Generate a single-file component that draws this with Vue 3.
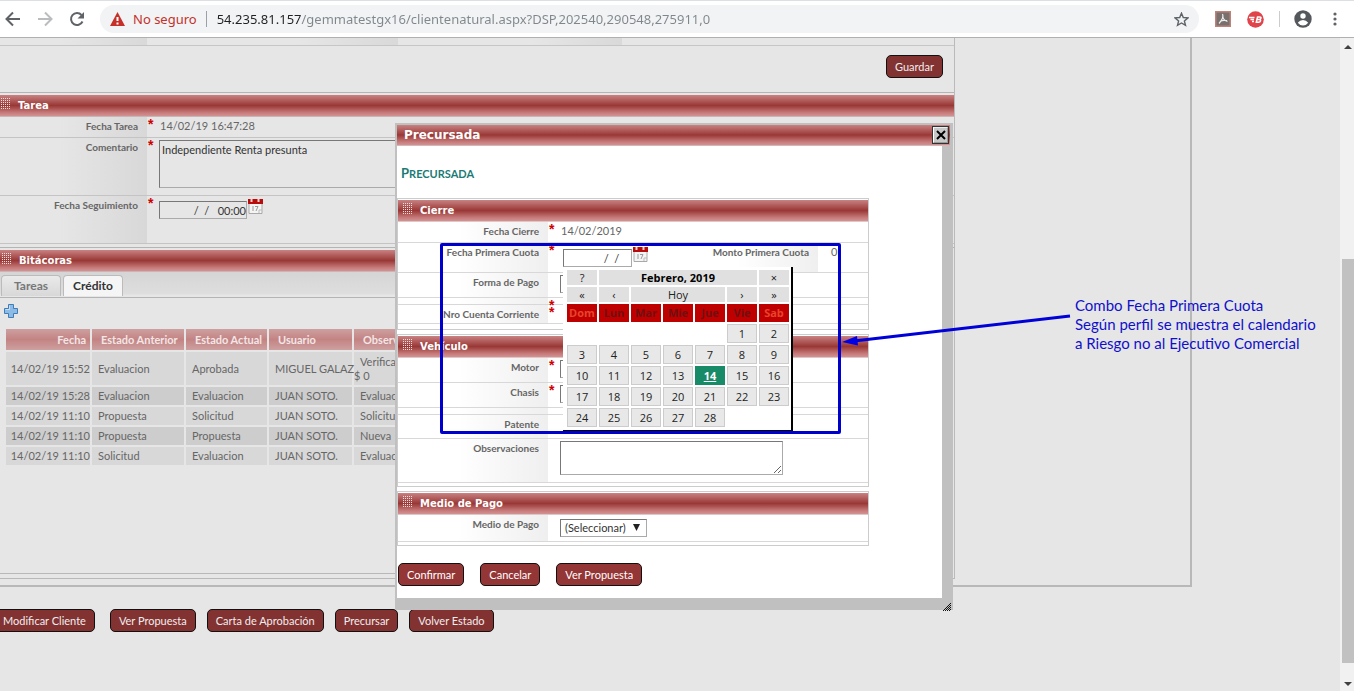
<script setup>
const log = [
  ['14/02/19 15:52', 'Evaluacion', 'Aprobada', 'MIGUEL GALAZ', 'Verificada $ 0'],
  ['14/02/19 15:28', 'Evaluacion', 'Evaluacion', 'JUAN SOTO.', 'Evaluacion'],
  ['14/02/19 11:10', 'Propuesta', 'Solicitud', 'JUAN SOTO.', 'Solicitud'],
  ['14/02/19 11:10', 'Propuesta', 'Propuesta', 'JUAN SOTO.', 'Nueva'],
  ['14/02/19 11:10', 'Solicitud', 'Evaluacion', 'JUAN SOTO.', 'Evaluacion'],
]
const days = ['Dom', 'Lun', 'Mar', 'Mie', 'Jue', 'Vie', 'Sab']
const weeks = [
  [0, 0, 0, 0, 0, 1, 2],
  [3, 4, 5, 6, 7, 8, 9],
  [10, 11, 12, 13, 14, 15, 16],
  [17, 18, 19, 20, 21, 22, 23],
  [24, 25, 26, 27, 28, 0, 0],
]
const actions = ['Modificar Cliente', 'Ver Propuesta', 'Carta de Aprobación', 'Precursar', 'Volver Estado']
</script>

<template>
  <div class="window">
    <svg class="defs" width="0" height="0" aria-hidden="true">
      <symbol id="cal" viewBox="0 0 15 16">
        <path d="M1 5h13v10.500H1z" fill="#f4f4f4" stroke="#a9a9a9" />
        <path d="M0 1h15v5H0z" fill="#b80c0c" />
        <path d="M3.500 1v3M10.500 1v3" stroke="#f3d0d0" stroke-width="2" />
        <path d="M5 8v5M7 8.500h3L8 13" fill="none" stroke="#9a9a9a" />
        <path d="M11 15v-3h3" fill="none" stroke="#bbb" />
      </symbol>
      <symbol id="grip" viewBox="0 0 9 11">
        <path v-for="y in 6" :key="y" :d="`M0 ${y * 2 - 1.5}h9`" stroke="#f4dcdc" stroke-dasharray="1 1" />
      </symbol>
    </svg>

    <header class="chrome">
      <button class="nav" aria-label="Atrás"><svg width="16" height="16" viewBox="0 0 16 16"><path d="M15 8H2M8 1.500 1.500 8 8 14.500" fill="none" stroke="#5f6368" stroke-width="2" /></svg></button>
      <button class="nav" aria-label="Adelante"><svg width="16" height="16" viewBox="0 0 16 16"><path d="M1 8h13M8 1.500 14.500 8 8 14.500" fill="none" stroke="#babcbe" stroke-width="2" /></svg></button>
      <button class="nav" aria-label="Recargar"><svg width="16" height="16" viewBox="0 0 16 16"><path d="M13.500 10.500A6 6 0 1 1 12.500 4" fill="none" stroke="#5f6368" stroke-width="2" /><path d="M15 1v6.500H8.500z" fill="#5f6368" /></svg></button>
      <div class="omnibox">
        <svg width="15" height="14" viewBox="0 0 15 14"><path d="M7.500 0 15 14H0z" fill="#c5302a" /><path d="M7.500 5v4M7.500 10.500v2" stroke="#fff" stroke-width="2" /></svg>
        <span class="insecure">No seguro</span>
        <input class="url" aria-label="Dirección" value="54.235.81.157/gemmatestgx16/clientenatural.aspx?DSP,202540,290548,275911,0" />
        <button class="star" aria-label="Favorito"><svg width="15" height="15" viewBox="0 0 15 15"><path d="M7.500 1.200 9.300 5.500l4.600.4-3.500 3 1.100 4.500-4-2.400-4 2.400 1.100-4.500-3.500-3 4.600-.4z" fill="none" stroke="#5f6368" stroke-width="1.400" /></svg></button>
      </div>
      <div class="tools">
        <svg width="16" height="16" viewBox="0 0 16 16"><path d="M0 0h16v16H0z" fill="#c08278" /><path d="M1.500 1.500h13v13h-13z" fill="#77706e" /><path d="M7.500 3c1 2 .5 5-3.500 9.500M7.700 5c.3 3 2 5 4.800 5.300M5 10.500c2-1.200 4-1.400 7-.8" fill="none" stroke="#eee" stroke-width="1.200" /></svg>
        <svg width="17" height="17" viewBox="0 0 17 17"><circle cx="8.500" cy="8.500" r="8.300" fill="#e0444a" /><path d="M2 6.500h5.500M3.500 8.500H7M5 10.500h2" stroke="#fff" stroke-width="1.400" /><path d="M10.500 6h2.200q1.600.1 1.200 1.300-.3 1.100-1.600 1.200H10q0 0 2.500 0 1.400.3 1 1.500-.4 1.300-1.800 1.300H9.300z" fill="none" stroke="#fff" stroke-width="1.500" /></svg>
        <span class="sep"></span>
        <svg width="18" height="18" viewBox="0 0 18 18"><circle cx="9" cy="9" r="8.700" fill="#54575c" /><circle cx="9" cy="6" r="2.700" fill="#fff" /><path d="M3.800 12.700q2-2.600 5.200-2.600t5.200 2.600Q12 15.600 9 15.600t-5.200-2.900" fill="#fff" /></svg>
        <svg width="4" height="14" viewBox="0 0 4 14"><g fill="#5f6368"><circle cx="2" cy="2" r="1.600" /><circle cx="2" cy="7" r="1.600" /><circle cx="2" cy="12" r="1.600" /></g></svg>
      </div>
    </header>

    <div class="view">
      <main class="page">
        <div class="frame">
          <div class="column">
            <div class="strip"><i></i><i></i><i></i></div>
            <div class="save"><button class="btn">Guardar</button></div>

            <section class="tarea">
              <h2 class="band"><svg class="grip" width="9" height="11"><use href="#grip" /></svg>Tarea</h2>
              <div class="row r-fecha"><span class="lab">Fecha Tarea</span><b class="req">*</b><span class="val">14/02/19 16:47:28</span></div>
              <div class="row r-com"><label class="lab" for="com">Comentario</label><b class="req">*</b><textarea id="com" class="box">Independiente Renta presunta</textarea></div>
              <div class="row r-seg"><label class="lab" for="seg">Fecha Seguimiento</label><b class="req">*</b><input id="seg" class="box" value="/  /   00:00" /><svg class="cal" width="15" height="16"><use href="#cal" /></svg></div>
            </section>

            <section class="bitacoras">
              <h2 class="band"><svg class="grip" width="9" height="11"><use href="#grip" /></svg>Bitácoras</h2>
              <div class="tabs"><button>Tareas</button><button class="on">Crédito</button></div>
              <div class="log">
                <button class="add" aria-label="Agregar"><svg width="14" height="14" viewBox="0 0 14 14"><path d="M4.500.5h5v4h4v5h-4v4h-5v-4h-4v-5h4z" fill="#8dbbe6" stroke="#3f7db8" /><path d="M5.500 1.500v4h-4" fill="none" stroke="#c7e0f7" /></svg></button>
                <table>
                  <colgroup><col class="c1" /><col class="c2" /><col class="c3" /><col class="c4" /><col /></colgroup>
                  <thead><tr><th>Fecha</th><th>Estado Anterior</th><th>Estado Actual</th><th>Usuario</th><th>Observaciones</th></tr></thead>
                  <tbody>
                    <tr v-for="(r, i) in log" :key="i">
                      <td v-for="(c, j) in r" :key="j"><template v-if="i === 0 && j === 4"><span class="ind">Verificada</span><br />$ 0</template><template v-else>{{ c }}</template></td>
                    </tr>
                  </tbody>
                </table>
              </div>
            </section>
            <div class="foot"></div>
          </div>
        </div>
        <div class="actions"><button v-for="a in actions" :key="a" class="btn">{{ a }}</button></div>

        <div class="modal" role="dialog" aria-label="Precursada">
          <h1 class="title"><span>Precursada</span><button aria-label="Cerrar"><svg width="10" height="10" viewBox="0 0 10 10"><path d="m1 1 8 8M9 1 1 9" stroke="#000" stroke-width="2" /></svg></button></h1>
          <div class="body">
            <h2 class="heading">Precursada</h2>

            <section class="group tall">
              <h3 class="band"><svg class="grip" width="9" height="11"><use href="#grip" /></svg>Cierre</h3>
              <div class="row h21"><span class="lab">Fecha Cierre</span><b class="req">*</b><span class="val">14/02/2019</span></div>
              <div class="row h30"><label class="lab" for="cuota">Fecha Primera Cuota</label><b class="req">*</b><input id="cuota" class="box date" value="/  /" /><svg class="cal" width="15" height="16"><use href="#cal" /></svg><span class="lab second">Monto Primera Cuota</span><span class="zero">0</span></div>
              <div class="row h25"><label class="lab" for="forma">Forma de Pago</label><b class="req"></b><input id="forma" class="box field" /></div>
              <div class="row h7"><span class="lab"></span><b class="req">*</b></div>
              <div class="row h19"><span class="lab">Nro Cuenta Corriente</span><b class="req">*</b></div>
            </section>

            <section class="group">
              <h3 class="band"><svg class="grip" width="9" height="11"><use href="#grip" /></svg>Vehículo</h3>
              <div class="row h25"><label class="lab" for="motor">Motor</label><b class="req">*</b><input id="motor" class="box field" /></div>
              <div class="row h25"><label class="lab" for="chasis">Chasis</label><b class="req">*</b><input id="chasis" class="box field" /></div>
              <div class="row h7"><span class="lab"></span></div>
              <div class="row h24"><span class="lab">Patente</span></div>
              <div class="row h44"><label class="lab" for="obs">Observaciones</label><b class="req"></b><textarea id="obs" class="box obs"></textarea></div>
            </section>

            <section class="group">
              <h3 class="band"><svg class="grip" width="9" height="11"><use href="#grip" /></svg>Medio de Pago</h3>
              <div class="row h27"><label class="lab" for="medio">Medio de Pago</label><b class="req"></b>
                <span class="pick"><select id="medio" class="box"><option>(Seleccionar)</option></select><svg width="7" height="7" viewBox="0 0 7 7"><path d="M0 0h7L3.500 7z" fill="#222" /></svg></span>
              </div>
            </section>

            <div class="confirm"><button class="btn">Confirmar</button><button class="btn">Cancelar</button><button class="btn">Ver Propuesta</button></div>
          </div>
          <svg class="grab" width="8" height="8" viewBox="0 0 8 8"><path d="M0 8 8 0M2 8l6-6M4 8l4-4M6 8l2-2" stroke="#111" /></svg>
        </div>

        <table class="calendar">
          <tbody>
            <tr class="top"><td>?</td><td colspan="5" class="month">Febrero, 2019</td><td>×</td></tr>
            <tr class="top"><td>«</td><td>‹</td><td colspan="3">Hoy</td><td>›</td><td>»</td></tr>
            <tr class="names"><th v-for="d in days" :key="d">{{ d }}</th></tr>
            <tr v-for="(w, i) in weeks" :key="i" class="week">
              <td v-for="(d, j) in w" :key="j" :class="{ blank: !d, today: d === 14 }">{{ d || '' }}</td>
            </tr>
          </tbody>
        </table>

        <div class="mark"></div>
        <svg class="arrow" width="232" height="36" viewBox="0 0 232 36"><path d="M228 4 12 29" stroke="#0000d8" stroke-width="3" /><path d="M0 30 15 24 16 33.500z" fill="#0000e6" /></svg>
        <p class="note">Combo Fecha Primera Cuota<br />Según perfil se muestra el calendario<br />a Riesgo no al Ejecutivo Comercial</p>
      </main>

      <div class="scroll">
        <svg width="8" height="4" viewBox="0 0 8 4"><path d="M0 4h8L4 0z" fill="#404040" /></svg>
        <span class="thumb"></span>
        <svg width="8" height="4" viewBox="0 0 8 4"><path d="M0 0h8L4 4z" fill="#404040" /></svg>
      </div>
    </div>
  </div>
</template>

<style>
body { overflow: hidden; }
</style>

<style scoped>
* { box-sizing: border-box; }
.window { height: 100vh; display: flex; flex-direction: column; font: 11px/14px Lato, "Liberation Sans", sans-serif; color: #666; background: #e6e6e6; }
.defs { position: absolute; }
button { font: inherit; color: inherit; background: none; border: 0; padding: 0; }
h1, h2, h3, p { margin: 0; }

.chrome { height: 38px; flex: none; display: flex; align-items: center; background: #fff; border-top: 1px solid #dcdfe3; border-bottom: 1px solid #b0b0b0; padding: 0 17px 0 5px; }
.nav { width: 16px; height: 16px; margin-right: 16px; }
.nav svg, .star svg { display: block; }
.omnibox { flex: 1; height: 28px; display: flex; align-items: center; border-radius: 14px; background: #f1f3f4; padding: 0 10px 0 10px; font: 13px/20px "Noto Sans", "Open Sans", sans-serif; margin-left: -1px; }
.insecure { color: #c5302a; margin-left: 8px; padding-right: 9px; border-right: 1px solid #9aa0a6; line-height: 16px; white-space: nowrap; }
.url { flex: 1; min-width: 0; border: 0; padding: 0; margin-left: 10px; font: inherit; color: transparent; background: linear-gradient(90deg, #202124 84px, #80868b 84px); background-clip: text; -webkit-background-clip: text; }
.tools { display: flex; align-items: center; gap: 16px; margin-left: 16px; }
.sep { width: 1px; height: 16px; margin: 0 -2px 0 -1px; background: #ccc; }
.tools svg:last-child { margin-left: 5px; }

.view { flex: 1; min-height: 0; display: flex; }
.page { flex: 1; min-width: 0; position: relative; overflow: hidden; }
.scroll { width: 14px; flex: none; display: flex; flex-direction: column; align-items: center; padding: 7px 0 5px; background: #f1f1f1; }
.scroll svg { margin-left: 2px; }
.thumb { flex: none; width: 12px; height: 63%; margin: auto 0 19px 2px; background: #c1c1c1; }

.frame { margin-right: 148px; border-right: 2px solid #b8b8b8; border-bottom: 2px solid #b8b8b8; padding-bottom: 6px; }
.column { margin-right: 235px; border-right: 1px solid #bababa; }
.strip { height: 8px; display: flex; border-bottom: 1px solid #c6c6c6; }
.strip i { flex: none; width: 147px; background: linear-gradient(90deg, #e6e6e6 40%, #d9d9d9); }
.strip i + i { width: 251px; background: linear-gradient(90deg, #e6e6e6 60%, #d9d9d9); }
.strip i + i + i { width: 224px; }
.save { padding: 9px 11px 14px; display: flex; justify-content: flex-end; }
.btn { height: 23px; flex: none; padding: 0 8px; border: 1px solid #111; border-radius: 5px; background: #833232; color: #eee; white-space: nowrap; }

.band { height: 21px; display: flex; align-items: center; color: #fff; font: bold 10px/14px "DejaVu Sans", sans-serif; background: linear-gradient(#c98282, #993836 50%, #c87c7c 85%, #d49292); }
.grip { margin: 0 8px 5px 1px; }
.tarea { border-top: 1px solid #b4b4b4; border-bottom: 1px solid #b4b4b4; padding: 2px 0 3px; }
.tarea .band, .bitacoras .band { border-bottom: 1px solid #c9b5b5; height: 22px; }
.row { display: flex; align-items: flex-start; border-bottom: 1px solid #c4c4c4; }
.lab { width: 147px; flex: none; align-self: stretch; padding: 2px 9px 0 0; text-align: right; font-weight: bold; font-size: 10px; white-space: nowrap; background: linear-gradient(90deg, transparent 40%, #d8d8d8); }
.req { width: 11px; margin-left: 1px; flex: none; color: #d00000; font: bold 14px/14px "Liberation Sans", sans-serif; }
.val { padding: 2px 0 0 1px; }
.box { border: 1px solid #aaa; border-top-color: #777; border-left-color: #777; border-radius: 0; background: transparent; font: inherit; color: #333; padding: 2px; margin: 0; resize: none; outline: 0; }
.r-fecha { height: 21px; }
.r-com { min-height: 58px; }
.r-com .box { flex: 1; height: 48px; margin: 2px 8px 0 0; }
.r-seg { min-height: 48px; }
.r-seg .box { width: 88px; height: 18px; margin-top: 5px; text-align: right; padding: 0; }
.r-seg .cal { margin: 2px 0 0 1px; }

.bitacoras { padding-top: 2px; margin-right: 2px; }
.bitacoras .band { padding-left: 1px; }
.tabs { display: flex; gap: 2px; height: 26px; padding: 3px 1px 3px; border-bottom: 1px solid #b4b4b4; background: linear-gradient(#d5d5d5, #dedede 22px, #e6e6e6 23px); }
.tabs button { height: 21px; width: 60px; border: 1px solid #bbb; border-bottom: 0; border-radius: 4px 4px 0 0; background: linear-gradient(#eaeaea, #d8d8d8); font-weight: bold; font-size: 12px; color: #777; }
.tabs .on { background: #f5f5f5; color: #333; }
.log { min-height: 276px; padding: 6px 4px 0; border-bottom: 1px solid #b8b8b8; }
.add { display: block; height: 14px; }
.log table { margin-top: 9px; width: 100%; table-layout: fixed; border-spacing: 2px; }
.c1 { width: 84px; } .c2 { width: 92px; } .c3 { width: 81px; } .c4 { width: 83px; }
.log th { height: 21px; padding: 0 3px 0 9px; text-align: left; color: #f2e6e6; background: linear-gradient(#cda0a0, #c48383 50%, #cda0a0); white-space: nowrap; }
.log td { height: 18px; padding: 0 0 0 6px; white-space: nowrap; background: #d8d8d8; }
.log td:first-child { text-align: right; padding: 0; }
.log th:first-child { text-align: right; padding-right: 4px; }
.log tr:nth-child(even) td { background: #cdcdcd; }
.log tbody tr:first-child td { height: 33px; }
.log tbody tr:first-child td:last-child { padding-left: 0; }
.ind { padding-left: 6px; }
.foot { height: 5px; border-bottom: 1px solid #b8b8b8; }

.actions { display: flex; align-items: center; gap: 11px; margin: 22px 0 0 -6px; }
.actions .btn:first-child { margin-right: 4px; }

.modal { position: absolute; left: 395px; top: 85px; width: 558px; border: 2px solid #c0c0c0; border-width: 2px 11px 12px 2px; background: #fff; }
.title { height: 21px; margin-right: -8px; padding: 0 1px 0 7px; display: flex; align-items: center; justify-content: space-between; color: #fff; font: bold 12px/16px "DejaVu Sans", sans-serif; background: linear-gradient(#c98282, #993836 50%, #c87c7c 85%, #d49292); border-bottom: 1px solid #d0b8b8; }
.title button { width: 17px; height: 18px; display: grid; place-items: center; background: #c8c8c8; border: 2px outset #eee; border-left-color: #fff; outline: 1px solid #333; outline-offset: -1px; }
.heading { padding: 19px 0 16px 4px; font: bold 11px/16px Lato, sans-serif; text-transform: uppercase; color: #1b7b74; }
.heading::first-letter { font-size: 13px; }
.group { width: 472px; max-width: 100%; margin-bottom: 4px; border: 1px solid #ccc; padding: 1px 0 3px; }
.tall { padding-bottom: 5px; }
.group .band { height: 22px; padding-left: 4px; border-bottom: 1px solid #ddc8c8; }
.group .row { border-color: #d8d8d8; }
.group .lab { width: 150px; background: linear-gradient(90deg, transparent 40%, #efefef); }
.group .box { background: #fff; }
.h21 { height: 21px; } .h30 { height: 30px; } .h25 { height: 25px; } .h7 { height: 7px; } .h19 { height: 19px; } .h24 { height: 24px; } .h44 { height: 44px; } .h27 { height: 27px; }
.date { width: 69px; height: 18px; margin: 6px 0 0 3px; text-align: center; padding-left: 30px; }
.h30 .cal { margin: 3px 0 0 1px; }
.group .second { width: auto; margin-left: auto; padding-left: 30px; }
.zero { width: 50px; padding: 2px 32px 0 13px; }
.field { width: 220px; height: 18px; margin-top: 2px; }
.obs { width: 223px; height: 34px; margin-top: 2px; resize: both; }
.pick { position: relative; margin-top: 4px; }
.pick select { display: block; width: 87px; height: 18px; appearance: none; padding: 0 4px; }
.pick svg { position: absolute; right: 7px; top: 5px; pointer-events: none; }
.confirm { display: flex; gap: 16px; padding: 13px 1px 12px; }
.confirm .btn { background: #943636; color: #fff; }
.grab { position: absolute; right: -9px; bottom: -13px; }

.calendar { position: absolute; left: 563px; top: 229px; width: 230px; table-layout: fixed; border-spacing: 2px; background: #fff; border: solid #000; border-width: 0 2px 2px 0; padding: 1px 0 1px 2px; color: #222; font: 11px/14px "Open Sans", sans-serif; }
.calendar td, .calendar th { padding: 0; text-align: center; line-height: 14px; }
.calendar .top td { height: 15px; background: #e0e0e0; }
.calendar .top .month { font-weight: bold; color: #000; }
.calendar .names th { height: 18px; background: #bf0000; color: #701010; }
.calendar .names th:first-child, .calendar .names th:last-child { color: #e8442c; }
.calendar .week td { height: 19px; border: 1px solid #ccc; background: #e8e8e8; }
.calendar .week .blank { border-color: transparent; background: none; }
.calendar .week .today { background: #178a67; border-color: #178a67; color: #fff; font-weight: bold; text-decoration: underline; }

.mark { position: absolute; left: 440px; top: 205px; width: 401px; height: 191px; border: 3px solid #0000cd; border-radius: 2px; }
.arrow { position: absolute; left: 842px; top: 274px; }
.note { position: absolute; left: 1075px; top: 258px; font: 15px/19px Lato, sans-serif; color: #1010cc; white-space: nowrap; }
</style>
